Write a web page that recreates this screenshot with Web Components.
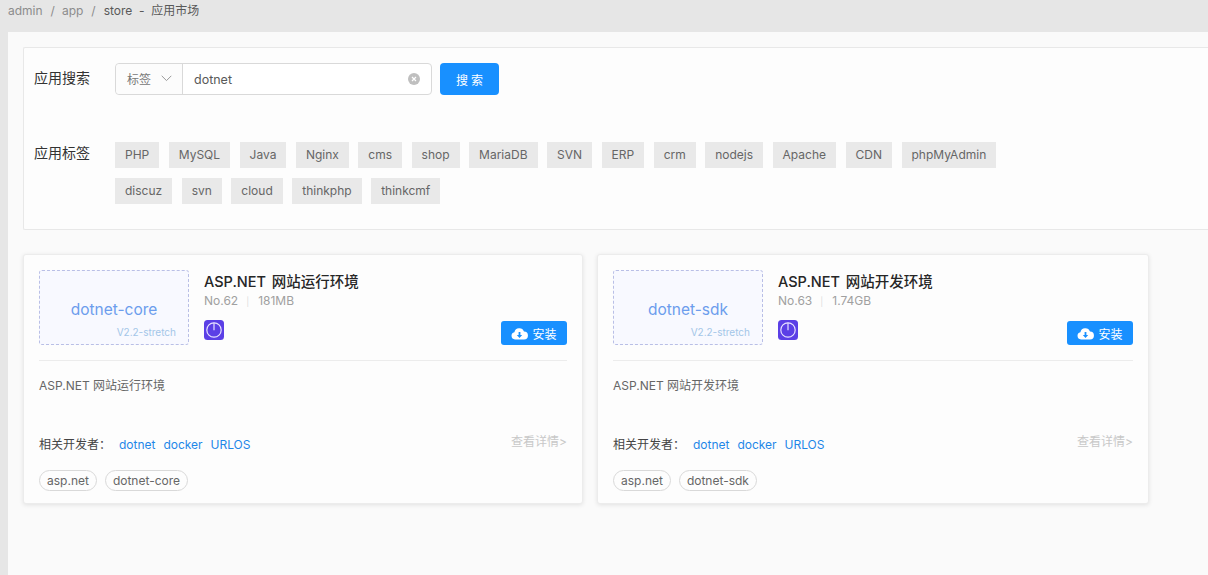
<!DOCTYPE html>
<html lang="zh-CN">
  <head>
    <meta charset="UTF-8" />
    <title>应用市场</title>
    <style>
      html, body { margin: 0; height: 100%; }
      body {
        background: #e6e6e6;
        font-family: Inter, "Noto Sans CJK SC", sans-serif;
        overflow: hidden;
      }
    </style>
  </head>
  <body>
    <template id="store-page-template">
      <style>
        :host { display: block; height: 575px; }
        .content {
          margin-left: 8px;
          height: 543px;
          box-sizing: border-box;
          padding: 15px 0 0 15px;
          background: #fafafa;
        }
        .cards {
          display: grid;
          grid-template-columns: 560px 552px;
          column-gap: 14px;
          margin-top: 24px;
        }
      </style>
      <slot name="crumbs"></slot>
      <div class="content">
        <slot name="search"></slot>
        <div class="cards"><slot></slot></div>
      </div>
    </template>

    <template id="bread-crumbs-template">
      <style>
        :host {
          display: flex;
          height: 32px;
          box-sizing: border-box;
          padding: 3px 0 0 8px;
          font-size: 12px;
          line-height: 16px;
          color: #8c8c8c;
        }
        i { font-style: normal; margin: 0 7px 0 8px; }
        b { font-weight: 400; color: #595959; margin-left: 1px; }
      </style>
      <span>admin</span><i>/</i><span>app</span><i>/</i>
      <b>store&nbsp; -&nbsp; 应用市场</b>
    </template>

    <template id="search-panel-template">
      <style>
        :host {
          display: block;
          height: 183px;
          box-sizing: border-box;
          margin-right: -4px;
          padding: 15px 0 0 10px;
          background: #fdfdfd;
          border: 1px solid #e8e8e8;
          border-right: 0;
          border-radius: 2px 0 0 2px;
        }
        .row { display: flex; }
        .label { width: 81px; font-size: 14px; color: #333; line-height: 30px; }
        .tags-row { margin-top: 47px; }
        .tags-row .label { line-height: 21px; }
        .picker {
          display: flex;
          width: 317px;
          height: 32px;
          box-sizing: border-box;
          border: 1px solid #d9d9d9;
          border-radius: 4px;
          background: #fff;
          font-size: 12px;
          color: #595959;
        }
        .kind {
          display: flex;
          align-items: center;
          width: 67px;
          box-sizing: border-box;
          padding: 0 0 2px 11px;
          border-right: 1px solid #d9d9d9;
          background: #fcfcfc;
          border-radius: 4px 0 0 4px;
          color: #777;
        }
        .kind svg { margin-left: 10px; }
        .value {
          flex: 1;
          padding-left: 11px;
          line-height: 32px;
          font-size: 12.5px;
        }
        .clear { align-self: center; margin-right: 11px; }
        .go {
          width: 59px;
          height: 32px;
          margin-left: 8px;
          border: 0;
          padding: 0 0 0 3px;
          border-radius: 4px;
          background: #1890ff;
          color: #fff;
          font: 12px Inter, "Noto Sans CJK SC", sans-serif;
          letter-spacing: 3px;
        }
        .tags {
          display: flex;
          flex-wrap: wrap;
          gap: 10px 9.5px;
          width: 900px;
        }
      </style>
      <div class="row">
        <div class="label">应用搜索</div>
        <div class="picker">
          <div class="kind">标签
            <svg width="11" height="7" viewBox="0 0 11 7" fill="none" stroke="#999" stroke-width="1"><path d="M.7.8 5.5 5.6 10.3.8"/></svg>
          </div>
          <div class="value">dotnet</div>
          <svg class="clear" width="12" height="12" viewBox="0 0 12 12">
            <circle cx="6" cy="6" r="6" fill="#bfbfbf"/>
            <path d="M4 4l4 4M8 4l-4 4" stroke="#fff" stroke-width="1.2"/>
          </svg>
        </div>
        <button class="go">搜索</button>
      </div>
      <div class="row tags-row">
        <div class="label">应用标签</div>
        <div class="tags"><slot></slot></div>
      </div>
    </template>

    <template id="tag-chip-template">
      <style>
        :host {
          display: block;
          height: 26px;
          padding: 0 10px;
          background: #e9e9e9;
          font-size: 12px;
          line-height: 26px;
          color: #666;
        }
      </style>
      <slot></slot>
    </template>

    <template id="app-card-template">
      <style>
        :host {
          display: block;
          height: 250px;
          box-sizing: border-box;
          padding: 15px 15px 0;
          background: #fdfdfd;
          border: 1px solid #ececec;
          border-radius: 3px;
          box-shadow: 0 1px 4px rgba(0, 0, 0, 0.1);
        }
        .head {
          display: flex;
          height: 91px;
          box-sizing: border-box;
          border-bottom: 1px solid #ececec;
        }
        .logo {
          position: relative;
          width: 150px;
          height: 75px;
          box-sizing: border-box;
          border: 1px dashed #b9bfe6;
          border-radius: 3px;
          background: #f8f9ff;
          text-align: center;
          color: #6c9ded;
          font-size: 15.5px;
          line-height: 78px;
        }
        .version {
          position: absolute;
          right: 12px;
          bottom: 6px;
          font-size: 10px;
          line-height: 12px;
          color: #a3c6e8;
        }
        .info {
          flex: 1;
          display: flex;
          flex-direction: column;
          margin-left: 15px;
        }
        .title {
          font-size: 14.5px;
          font-weight: 500;
          line-height: 24px;
          word-spacing: 2px;
          color: #262626;
        }
        .meta {
          font-size: 12px;
          line-height: 14px;
          color: #a0a0a0;
        }
        .meta i { font-style: normal; color: #ddd; margin: 0 9px 0 8px; font-size: 9px; }
        .bottom {
          display: flex;
          justify-content: space-between;
          align-items: flex-start;
          margin-top: 11px;
          height: 26px;
        }
        .install {
          display: flex;
          align-items: center;
          justify-content: center;
          width: 66px;
          height: 24px;
          margin-top: 1px;
          border-radius: 3px;
          background: #1890ff;
          color: #fff;
          font-size: 12px;
        }
        .install svg { margin-right: 4px; }
        .icon { display: block; }
        .desc {
          margin-top: 16px;
          height: 18px;
          font-size: 12px;
          line-height: 18px;
          color: #666;
        }
        .devs {
          display: flex;
          align-items: center;
          justify-content: space-between;
          margin-top: 38px;
          height: 20px;
          font-size: 12px;
          color: #444;
        }
        .devs a { color: #1f87e8; margin-right: 4.5px; }
        .label { margin-right: 8px; }
        .more { color: #c8c8c8; position: relative; top: -3px; }
        .pills { display: flex; gap: 8px; margin-top: 17px; }
        .pills span {
          height: 21px;
          box-sizing: border-box;
          padding: 0 7px;
          border: 1px solid #d9d9d9;
          border-radius: 11px;
          font-size: 12px;
          line-height: 19px;
          color: #666;
        }
      </style>
      <div class="head">
        <div class="logo"><span id="name"></span><span class="version" id="version"></span></div>
        <div class="info">
          <div class="title" id="title"></div>
          <div class="meta"><span id="no"></span><i>|</i><span id="size"></span></div>
          <div class="bottom">
            <svg class="icon" width="20" height="20" viewBox="0 0 20 20">
              <rect width="20" height="20" rx="3.5" fill="#5b3fe6"/>
              <circle cx="10" cy="10" r="7.2" fill="none" stroke="#e6e0ff" stroke-width="1.2"/>
              <path d="M10 2.8v7.4" stroke="#e6e0ff" stroke-width="1.2"/>
            </svg>
            <div class="install">
              <svg width="17" height="13" viewBox="0 0 17 13">
                <path fill="#fff" d="M4 12.5a3.7 3.7 0 0 1-.6-7.3A5 5 0 0 1 13 4.6a3.9 3.9 0 0 1 0 7.9z"/>
                <path fill="#1890ff" d="M7.6 5h1.8v3h1.8L8.5 11 5.8 8h1.8z"/>
              </svg>安装
            </div>
          </div>
        </div>
      </div>
      <div class="desc" id="desc"></div>
      <div class="devs">
        <div><span class="label">相关开发者：</span><a>dotnet</a> <a>docker</a> <a>URLOS</a></div>
        <div class="more">查看详情&gt;</div>
      </div>
      <div class="pills"><span>asp.net</span><span id="pill"></span></div>
    </template>

    <script>
      // small helper so each element clones its own template
      class TemplateElement extends HTMLElement {
        constructor(id) {
          super();
          const template = document.getElementById(id);
          this.attachShadow({ mode: "open" }).appendChild(
            template.content.cloneNode(true)
          );
        }
      }

      class StorePage extends TemplateElement {
        constructor() { super("store-page-template"); }
      }
      class BreadCrumbs extends TemplateElement {
        constructor() { super("bread-crumbs-template"); }
      }
      class SearchPanel extends TemplateElement {
        constructor() { super("search-panel-template"); }
      }
      class TagChip extends TemplateElement {
        constructor() { super("tag-chip-template"); }
      }
      class AppCard extends TemplateElement {
        constructor() { super("app-card-template"); }
        connectedCallback() {
          const root = this.shadowRoot;
          root.getElementById("name").textContent = this.getAttribute("name");
          root.getElementById("version").textContent = this.getAttribute("version");
          root.getElementById("title").textContent = this.getAttribute("title");
          root.getElementById("desc").textContent = this.getAttribute("title");
          root.getElementById("no").textContent = this.getAttribute("no");
          root.getElementById("size").textContent = this.getAttribute("size");
          root.getElementById("pill").textContent = this.getAttribute("name");
        }
      }

      customElements.define("store-page", StorePage);
      customElements.define("bread-crumbs", BreadCrumbs);
      customElements.define("search-panel", SearchPanel);
      customElements.define("tag-chip", TagChip);
      customElements.define("app-card", AppCard);
    </script>

    <store-page>
      <bread-crumbs slot="crumbs"></bread-crumbs>
      <search-panel slot="search">
        <tag-chip>PHP</tag-chip><tag-chip>MySQL</tag-chip><tag-chip>Java</tag-chip>
        <tag-chip>Nginx</tag-chip><tag-chip>cms</tag-chip><tag-chip>shop</tag-chip>
        <tag-chip>MariaDB</tag-chip><tag-chip>SVN</tag-chip><tag-chip>ERP</tag-chip>
        <tag-chip>crm</tag-chip><tag-chip>nodejs</tag-chip><tag-chip>Apache</tag-chip>
        <tag-chip>CDN</tag-chip><tag-chip>phpMyAdmin</tag-chip>
        <tag-chip>discuz</tag-chip><tag-chip>svn</tag-chip><tag-chip>cloud</tag-chip>
        <tag-chip>thinkphp</tag-chip><tag-chip>thinkcmf</tag-chip>
      </search-panel>
      <app-card name="dotnet-core" version="V2.2-stretch" title="ASP.NET 网站运行环境" no="No.62" size="181MB"></app-card>
      <app-card name="dotnet-sdk" version="V2.2-stretch" title="ASP.NET 网站开发环境" no="No.63" size="1.74GB"></app-card>
    </store-page>
  </body>
</html>
